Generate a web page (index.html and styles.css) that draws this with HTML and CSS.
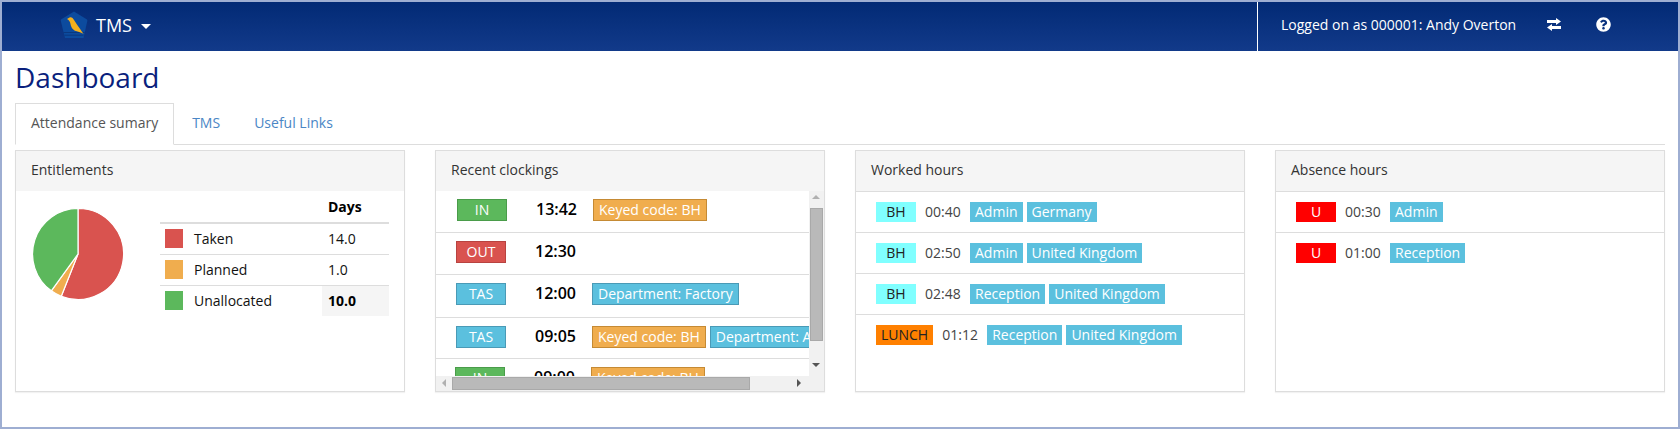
FILE: index.html
```html
<!DOCTYPE html>
<html lang="en">
<head>
<meta charset="utf-8">
<title>Dashboard</title>
<link rel="stylesheet" href="styles.css">
</head>
<body>
<div class="window">
  <header class="navbar">
    <a class="brand">
      <svg class="logo" viewBox="0 0 28 28" aria-hidden="true">
        <path d="M14 0.5 L27 8.5 Q27.5 9 27.3 10 L23.5 27 L5 27 L0.8 10 Q0.6 9 1 8.5 Z" fill="#0c4b9e"/>
        <path d="M3.5 21.5 H24.5 M4.5 24.2 H23.5" stroke="#0a3377" stroke-width="0.8"/>
        <path d="M7 8 L10 6.3 C12 6 13 7.5 14 9 C16 12 20 18 23.5 22.7 C20 21.5 18 20.5 16 20 C13 19.5 11 16 10.5 13 C10 11 9.5 9.3 7 8 Z" fill="#f5b01c"/>
      </svg>
      <span class="brand-name">TMS</span>
      <span class="caret"></span>
    </a>
    <div class="user">
      <span class="user-name">Logged on as 000001: Andy Overton</span>
      <svg class="icon-swap" viewBox="0 0 14 13" aria-hidden="true">
        <path d="M0 2 H9 V0 L14 3.5 L9 7 V5 H0 Z M14 8 V11 H5 V13 L0 9.5 L5 6 V8 Z" fill="#fff"/>
      </svg>
      <svg class="icon-help" viewBox="0 0 512 512" aria-hidden="true">
        <path fill="#fff" d="M504 256c0 136.997-111.043 248-248 248S8 392.997 8 256C8 119.083 119.043 8 256 8s248 111.083 248 248zM262.655 90c-54.497 0-89.255 22.957-116.549 63.758-3.536 5.286-2.353 12.415 2.715 16.258l34.699 26.31c5.205 3.947 12.621 3.008 16.665-2.122 17.864-22.658 30.113-35.797 57.303-35.797 20.429 0 45.698 13.148 45.698 32.958 0 14.976-12.363 22.667-32.534 33.976C247.128 238.528 216 254.941 216 296v4c0 6.627 5.373 12 12 12h56c6.627 0 12-5.373 12-12v-1.333c0-28.462 83.186-29.647 83.186-106.667 0-58.002-60.165-102-116.531-102zM256 338c-25.365 0-46 20.635-46 46 0 25.364 20.635 46 46 46s46-20.636 46-46c0-25.365-20.635-46-46-46z"/>
      </svg>
    </div>
  </header>

  <main class="content">
    <h1 class="title">Dashboard</h1>
    <nav class="tabs">
      <a class="tab active">Attendance sumary</a>
      <a class="tab">TMS</a>
      <a class="tab">Useful Links</a>
    </nav>

    <div class="panels">
      <section class="panel">
        <div class="panel-head flush">Entitlements</div>
        <div class="ent-body">
          <svg class="pie" viewBox="0 0 92 92" aria-hidden="true">
            <path d="M46 46 L46 0.5 A45.5 45.5 0 1 1 29.3 88.3 Z" fill="#d9534f" stroke="#fff" stroke-width="1.2"/>
            <path d="M46 46 L29.3 88.3 A45.5 45.5 0 0 1 19.3 82.8 Z" fill="#f0ad4e" stroke="#fff" stroke-width="1.2"/>
            <path d="M46 46 L19.3 82.8 A45.5 45.5 0 0 1 46 0.5 Z" fill="#5cb85c" stroke="#fff" stroke-width="1.2"/>
          </svg>
          <table class="legend">
            <colgroup><col class="col-swatch"><col class="col-label"><col class="col-days"></colgroup>
            <thead><tr><th></th><th></th><th class="days">Days</th></tr></thead>
            <tbody>
              <tr><td class="sw-cell"><span class="swatch red"></span></td><td>Taken</td><td class="days">14.0</td></tr>
              <tr><td class="sw-cell"><span class="swatch amber"></span></td><td>Planned</td><td class="days">1.0</td></tr>
              <tr><td class="sw-cell"><span class="swatch green"></span></td><td>Unallocated</td><td class="days total">10.0</td></tr>
            </tbody>
          </table>
        </div>
      </section>

      <section class="panel">
        <div class="panel-head flush">Recent clockings</div>
        <div class="clock-body">
          <div class="clock-row in-1"><span class="state success">IN</span><span class="time">13:42</span><span class="chip warning">Keyed code: BH</span></div>
          <div class="clock-row in-2"><span class="state danger">OUT</span><span class="time">12:30</span></div>
          <div class="clock-row in-2 tall"><span class="state info">TAS</span><span class="time">12:00</span><span class="chip info">Department: Factory</span></div>
          <div class="clock-row in-2 short"><span class="state info">TAS</span><span class="time">09:05</span><span class="chip warning">Keyed code: BH</span><span class="chip info">Department: Admin</span></div>
          <div class="clock-row in-3"><span class="state success">IN</span><span class="time">09:00</span><span class="chip warning">Keyed code: BH</span></div>
          <div class="vbar"><span class="arrow up"></span><span class="vthumb"></span><span class="arrow down"></span></div>
          <div class="hbar"><span class="arrow left"></span><span class="hthumb"></span><span class="arrow right"></span></div>
        </div>
      </section>

      <section class="panel">
        <div class="panel-head">Worked hours</div>
        <div class="hours-row"><span class="code cyan">BH</span><span class="dur">00:40</span><span class="tag">Admin</span><span class="tag">Germany</span></div>
        <div class="hours-row"><span class="code cyan">BH</span><span class="dur">02:50</span><span class="tag">Admin</span><span class="tag">United Kingdom</span></div>
        <div class="hours-row"><span class="code cyan">BH</span><span class="dur">02:48</span><span class="tag">Reception</span><span class="tag">United Kingdom</span></div>
        <div class="hours-row last"><span class="code orange">LUNCH</span><span class="dur">01:12</span><span class="tag">Reception</span><span class="tag">United Kingdom</span></div>
      </section>

      <section class="panel">
        <div class="panel-head">Absence hours</div>
        <div class="hours-row"><span class="code red-code">U</span><span class="dur">00:30</span><span class="tag">Admin</span></div>
        <div class="hours-row last"><span class="code red-code">U</span><span class="dur">01:00</span><span class="tag">Reception</span></div>
      </section>
    </div>
  </main>
</div>
</body>
</html>
```
FILE: styles.css
```css
* { box-sizing: border-box; }
html, body { margin: 0; padding: 0; height: 100%; }
body {
  font-family: "Open Sans", "Liberation Sans", sans-serif;
  font-size: 14px;
  line-height: 20px;
  color: #333;
  background: #fff;
  overflow: hidden;
}
.window {
  height: 429px;
  border: 2px solid #9eaed2;
  display: flex;
  flex-direction: column;
}
.navbar {
  height: 49px;
  flex: none;
  display: flex;
  justify-content: space-between;
  color: #fff;
  background: linear-gradient(#022a75, #123a8a);
}
.brand {
  display: flex;
  align-items: center;
  padding: 0 0 3px 58px;
}
.logo { width: 28px; height: 28px; display: block; }
.brand-name { font-size: 18px; margin-left: 8px; }
.caret {
  margin-left: 9px;
  margin-top: 3px;
  width: 0;
  height: 0;
  border-left: 5px solid transparent;
  border-right: 5px solid transparent;
  border-top: 5px solid #fff;
}
.user {
  width: 421px;
  border-left: 1px solid #fff;
  display: flex;
  align-items: center;
  padding: 0 0 2px 23px;
}
.user-name { width: 266px; margin-top: -1px; }
.icon-swap { width: 14px; height: 13px; display: block; margin-bottom: 3px; }
.icon-help { width: 15px; height: 15px; display: block; margin-left: 35px; margin-bottom: 3px; }

.content { flex: 1; padding: 0 13px; }
.title {
  margin: 0;
  height: 52px;
  padding: 9px 0 0;
  font-size: 28px;
  line-height: 34px;
  font-weight: 400;
  color: #0a1f7d;
}
.tabs {
  display: flex;
  gap: 2px;
  height: 42px;
  border-bottom: 1px solid #ddd;
}
.tab {
  height: 42px;
  padding: 9px 15px;
  border: 1px solid transparent;
  color: #4a86c5;
}
.tab.active {
  color: #555;
  background: #fff;
  border-color: #ddd #ddd #fff;
}
.panels {
  margin-top: 5px;
  display: grid;
  grid-template-columns: repeat(4, 1fr);
  gap: 30px;
}
.panel {
  height: 242px;
  border: 1px solid #ddd;
  background: #fff;
  box-shadow: 0 1px 1px rgba(0,0,0,.05);
  overflow: hidden;
}
.panel-head {
  height: 41px;
  padding: 9px 15px;
  background: #f5f5f5;
  border-bottom: 1px solid #ddd;
}
.panel-head.flush { height: 40px; border-bottom: 0; }

.ent-body { display: flex; padding: 17px 15px 0 16px; }
.pie { width: 92px; height: 92px; display: block; flex: none; }
.legend {
  margin: -17px 0 0 36px;
  width: 229px;
  table-layout: fixed;
  border-collapse: collapse;
  color: #111;
  align-self: flex-start;
}
.col-swatch { width: 34px; }
.col-days { width: 67px; }
.legend th { height: 32px; padding: 0; border-bottom: 2px solid #ddd; text-align: left; color: #000; font-weight: 700; }
.legend td { height: 31px; padding: 0; border-top: 1px solid #ddd; }
.legend tbody tr:first-child td { border-top: 0; }
.legend .sw-cell { padding-left: 5px; }
.swatch { display: block; width: 18px; height: 19px; }
.swatch.red { background: #d9534f; }
.swatch.amber { background: #f0ad4e; }
.swatch.green { background: #5cb85c; }
.legend .days { padding-left: 6px; }
.legend .total { background: #f5f5f5; font-weight: 700; color: #000; }

.clock-body { position: relative; height: 200px; overflow: hidden; }
.clock-row {
  height: 42px;
  padding-top: 8px;
  border-bottom: 1px solid #ddd;
  display: flex;
  white-space: nowrap;
}
.clock-row.tall { height: 43px; }
.clock-row.short { height: 41px; }
.clock-row.in-1 { padding-left: 21px; }
.clock-row.in-2 { padding-left: 20px; }
.clock-row.in-3 { padding-left: 19px; }
.state, .chip {
  height: 22px;
  line-height: 19px;
  border: 1px solid;
  color: #fff;
  flex: none;
}
.state { width: 50px; text-align: center; }
.chip { padding: 0 5px; margin-right: 4px; }
.success { background: #5cb85c; border-color: #4a9c4a; }
.danger { background: #d9534f; border-color: #b84340; }
.info { background: #5bc0de; border-color: #4a9ab6; }
.warning { background: #f0ad4e; border-color: #c58a34; }
.time {
  width: 56px;
  margin-left: 29px;
  font-size: 16px;
  line-height: 21px;
  font-weight: 600;
  color: #000;
  flex: none;
}
.time + .chip { margin-left: 1px; }
.vbar {
  position: absolute;
  right: 0;
  top: 0;
  bottom: 15px;
  width: 15px;
  background: #f1f1f1;
}
.hbar {
  position: absolute;
  left: 0;
  right: 0;
  bottom: 0;
  height: 15px;
  background: #f1f1f1;
}
.vthumb {
  position: absolute;
  left: 1px;
  top: 17px;
  width: 13px;
  height: 133px;
  background: #b9b9b9;
  border: 1px solid #a9a9a9;
}
.hthumb {
  position: absolute;
  left: 16px;
  top: 1px;
  width: 298px;
  height: 13px;
  background: #b9b9b9;
  border: 1px solid #a9a9a9;
}
.arrow { position: absolute; width: 0; height: 0; border: 4px solid transparent; }
.arrow.up { left: 3px; top: 4px; border-top: 0; border-bottom: 4px solid #b0b0b0; }
.arrow.down { left: 3px; top: 172px; border-bottom: 0; border-top: 4px solid #555; }
.arrow.left { left: 6px; top: 3px; border-left: 0; border-right: 4px solid #b0b0b0; }
.arrow.right { left: 361px; top: 3px; border-right: 0; border-left: 4px solid #555; }

.hours-row {
  height: 41px;
  padding: 10px 0 0 20px;
  border-bottom: 1px solid #ddd;
  display: flex;
  white-space: nowrap;
  line-height: 19px;
}
.hours-row.last { border-bottom: 0; }
.code { min-width: 40px; height: 20px; padding: 0 5px; text-align: center; flex: none; }
.cyan { background: #80ffff; color: #222; }
.orange { background: #ff8000; color: #222; }
.red-code { background: #f00; color: #fff; }
.dur { margin: 0 5px 0 9px; width: 40px; color: #444; flex: none; }
.tag { height: 20px; padding: 0 5px; margin-right: 4px; background: #5bc0de; color: #fff; flex: none; }
```
